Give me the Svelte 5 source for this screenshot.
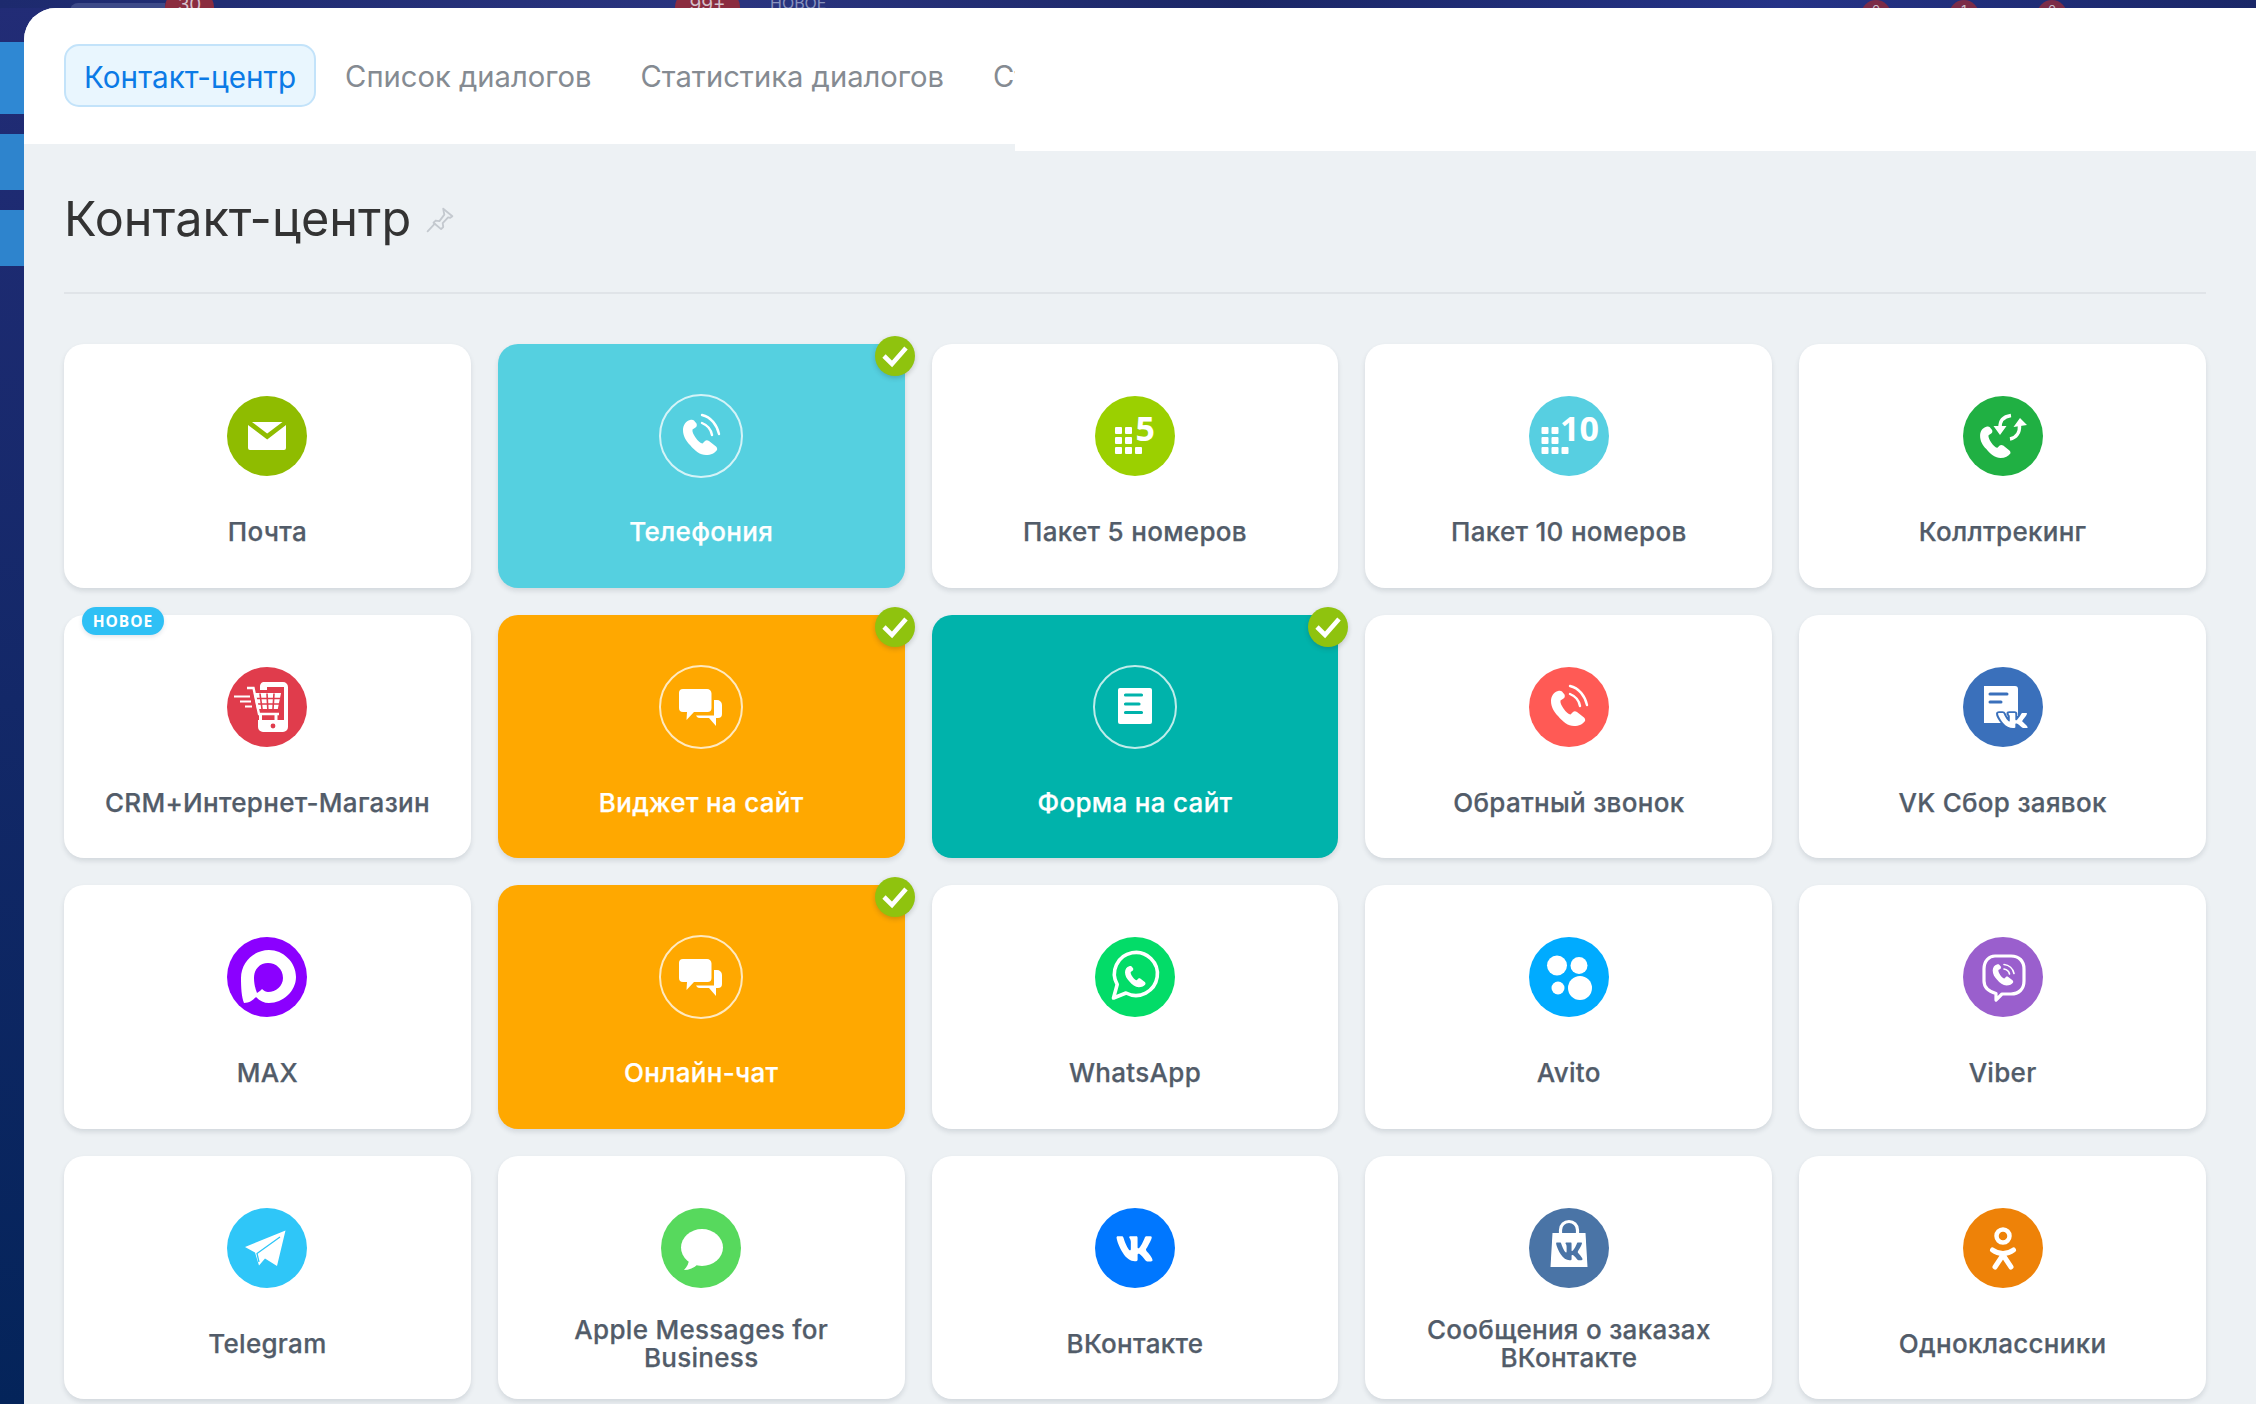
<script>
  const PHONE = "M29 24c-4 1-7 5-7 10c0 6 3 11 7 15c5 6 10 10 16 10c5 0 9-2 11-5c.5-1 0-2.5-1-3.5l-7-5.5c-1.5-1-3-1-4 0l-2.5 2.5c-2 0-4.500-2.500-7-6c-2-3-3.500-6-3-8l3-2c1.500-1 1.500-2.500 1-4l-2.500-3c-1-1-2.500-1-4-.5z";
  const VK = "M19.376 17.123h-1.744c-.66 0-.864-.525-2.05-1.727-1.033-1-1.49-1.135-1.744-1.135-.356 0-.458.102-.458.593v1.575c0 .424-.135.678-1.253.678-1.846 0-3.896-1.118-5.335-3.202C4.624 10.857 4.03 8.57 4.03 8.096c0-.254.102-.491.593-.491h1.744c.441 0 .61.203.78.677.863 2.49 2.303 4.675 2.896 4.675.22 0 .322-.102.322-.66V9.721c-.068-1.186-.695-1.287-.695-1.71 0-.204.17-.407.44-.407h2.744c.373 0 .508.203.508.643v3.473c0 .372.17.508.271.508.22 0 .407-.136.813-.542 1.254-1.406 2.151-3.574 2.151-3.574.119-.254.322-.491.763-.491h1.744c.525 0 .644.27.525.643-.22 1.017-2.354 4.031-2.354 4.031-.186.305-.254.44 0 .78.186.254.796.779 1.203 1.253.745.847 1.32 1.558 1.473 2.05.17.49-.085.744-.576.744z";

  const tabs = ["Контакт-центр", "Список диалогов", "Статистика диалогов", "Статистика"];

  const cards = [
    { label: "Почта", icon: "mail", tone: "t-mail" },
    { label: "Телефония", icon: "phone", tone: "t-cyan", on: true },
    { label: "Пакет 5 номеров", icon: "five", tone: "t-five" },
    { label: "Пакет 10 номеров", icon: "ten", tone: "t-ten" },
    { label: "Коллтрекинг", icon: "track", tone: "t-track" },
    { label: "CRM+Интернет-Магазин", icon: "shop", tone: "t-shop", fresh: true },
    { label: "Виджет на сайт", icon: "chat", tone: "t-orange", on: true },
    { label: "Форма на сайт", icon: "form", tone: "t-teal", on: true },
    { label: "Обратный звонок", icon: "phone", tone: "t-back" },
    { label: "VK Сбор заявок", icon: "vkform", tone: "t-vkform" },
    { label: "MAX", icon: "max", tone: "t-max" },
    { label: "Онлайн-чат", icon: "chat", tone: "t-orange", on: true },
    { label: "WhatsApp", icon: "wa", tone: "t-wa" },
    { label: "Avito", icon: "avito", tone: "t-avito" },
    { label: "Viber", icon: "viber", tone: "t-viber" },
    { label: "Telegram", icon: "tg", tone: "t-tg" },
    { label: "Apple Messages for Business", icon: "apple", tone: "t-apple" },
    { label: "ВКонтакте", icon: "vk", tone: "t-vk" },
    { label: "Сообщения о заказах ВКонтакте", icon: "vkshop", tone: "t-vkshop" },
    { label: "Одноклассники", icon: "ok", tone: "t-ok" }
  ];
</script>

<div class="app">
  <div class="topbar">
    <span class="pill"></span>
    <span class="red wide">30</span>
    <span class="red wider">99+</span>
    <span class="fresh-top">НОВОЕ</span>
    <span class="dot first">0</span>
    <span class="dot">1</span>
    <span class="dot">0</span>
  </div>
  <div class="body">
    <div class="rail">
      <span class="rail-tab big"></span>
      <span class="rail-tab"></span>
      <span class="rail-tab"></span>
    </div>
    <main class="panel">
      <header class="head">
        <nav class="tabs">
          {#each tabs as t, i}
            <span class="tab" class:active={i === 0}>{t}</span>
          {/each}
        </nav>
        <div class="filler"></div>
      </header>
      <section class="content">
        <div class="title-row">
          <h1>Контакт-центр</h1>
          <svg class="pin" viewBox="0 0 26 24" width="28" height="26" fill="none" stroke="#c4c9cf" stroke-width="1.7" stroke-linejoin="round" stroke-linecap="round">
            <path d="M16 1.500l8.500 7-2 1.500-2-.5-5 5.500.5 3.500-2 2-7-6 2-2 3.500.5 4.500-6-.5-2.500z" />
            <path d="M8 15.500L1.500 22.500" />
          </svg>
        </div>
        <div class="grid">
          {#each cards as c}
            <article class="card {c.tone}" class:on={c.on}>
              {#if c.fresh}<span class="fresh">НОВОЕ</span>{/if}
              {#if c.on}
                <span class="check">
                  <svg viewBox="0 0 40 40" width="40" height="40"><path d="M9 20l8 8 14-16" fill="none" stroke="#fff" stroke-width="4.600" /></svg>
                </span>
              {/if}
              <div class="ring">
                <svg class="icon" viewBox="0 0 80 80" width="80" height="80" fill="#fff">
                  {#if c.icon === "mail"}
                    <path d="M25 26H55.500L40.200 37.500Z" />
                    <path d="M21 29L40.200 43.500L59 29V52a2 2 0 0 1-2 2H23a2 2 0 0 1-2-2Z" />
                  {:else if c.icon === "phone"}
                    <path d={PHONE} />
                    <path d="M41 27c5 2 9 6 10 12M41 19c9 2 15 10 17 19" fill="none" stroke="#fff" stroke-width="2.400" stroke-linecap="round" />
                  {:else if c.icon === "five" || c.icon === "ten"}
                    <g transform={c.icon === "ten" ? "translate(-7.500 0)" : ""}>
                      <rect x="20" y="31" width="7" height="7" rx="1" />
                      <rect x="30" y="31" width="7" height="7" rx="1" />
                      <rect x="20" y="41" width="7" height="7" rx="1" />
                      <rect x="30" y="41" width="7" height="7" rx="1" />
                      <rect x="20" y="51" width="7" height="7" rx="1" />
                      <rect x="30" y="51" width="7" height="7" rx="1" />
                      <rect x="40" y="51" width="7" height="7" rx="1" />
                    </g>
                    {#if c.icon === "five"}
                      <text class="digits" x="40.500" y="45">5</text>
                    {:else}
                      <text class="digits" x="31" y="45">10</text>
                    {/if}
                  {:else if c.icon === "track"}
                    <path d={PHONE} transform="translate(-2.500 9.500) scale(.89)" />
                    <path d="M48 19.500C41 20.500 36.500 24 37 32M47 43C53 42 57 37 56.500 29" fill="none" stroke="#fff" stroke-width="3.400" />
                    <path d="M30.500 30L43.500 30L37 39ZM50.500 31L64 29L57 22Z" />
                  {:else if c.icon === "shop"}
                    <path d="M37 15H56a5 5 0 0 1 5 5V60a5 5 0 0 1-5 5H36a5 5 0 0 1-5-5V53H57V20H37Z" />
                    <path d="M36 15h4v8h-7v-3a5 5 0 0 1 3-5Z" />
                    <circle class="hole" cx="46" cy="59" r="2.400" />
                    <rect class="hole" x="25" y="24" width="32" height="27" />
                    <path d="M26.800 26H54L50.800 42H30Z" />
                    <path class="hs" d="M33 26.500L35 42M40 26.500L40.800 42M47 26.500L46 42M29 31.500H53M30 37H52" stroke-width="1.600" />
                    <path d="M20 21h6.500l5.500 26h20" fill="none" stroke="#fff" stroke-width="2.400" />
                    <path d="M33.500 48v5M49 48v5" fill="none" stroke="#fff" stroke-width="3" />
                    <path d="M7 29.500H23M13 34.500H24M18 39.500H25" fill="none" stroke="#fff" stroke-width="2.200" />
                  {:else if c.icon === "chat"}
                    <path d="M36 33H56a5 5 0 0 1 5 5V47a4 4 0 0 1-4 4H55L55 59L48 51H39a4 4 0 0 1-4-4Z" />
                    <path class="hole" d="M31 29H53V48.500H31Z" />
                    <path d="M22 22H46a4.500 4.500 0 0 1 4.500 4.500V41a4 4 0 0 1-4 4H33L25.500 53L26 45H22a4 4 0 0 1-4-4V26a4 4 0 0 1 4-4Z" />
                  {:else if c.icon === "form"}
                    <rect x="23" y="21" width="34" height="36" rx="2" />
                    <path class="hs" d="M30.500 28H46.500M30.500 37H44M30.500 45.500H46.500" stroke-width="3.200" stroke-linecap="round" />
                  {:else if c.icon === "vkform"}
                    <path d="M21 19H52a3 3 0 0 1 3 3V50H42V56H21Z" />
                    <path class="hs" d="M27 27H44M27 35H38" stroke-width="3" stroke-linecap="round" />
                    <path class="hs" d={VK} transform="translate(27.600 34) scale(1.850 1.580)" stroke-width="2.200" />
                    <path d={VK} transform="translate(27.600 34) scale(1.850 1.580)" />
                  {:else if c.icon === "max"}
                    <path d="M42 13C27 13 14 25 14 41C14 50 14.500 60 17 66C22 66 26 63 29 60C33 64 37 66 42 66C56 66 69 54 69 40C69 25 56 13 42 13Z" />
                    <path class="hole" d="M41 26C33 26 27 32 27 41C27 46 28 51 30 56C32 55 34 53 35 52C37 54 39 55 41 55C49 55 56 49 56 41C56 32 49 26 41 26Z" />
                  {:else if c.icon === "wa"}
                    <path d="M18.500 61l3.700-13.500A21.500 21.500 0 1 1 31 56Z" fill="none" stroke="#fff" stroke-width="3.600" stroke-linejoin="round" />
                    <path d={PHONE} transform="translate(16.800 14.800) scale(.6)" />
                  {:else if c.icon === "avito"}
                    <circle cx="28" cy="28.500" r="10" />
                    <circle cx="50" cy="28.500" r="8.500" />
                    <circle cx="29" cy="51" r="6.500" />
                    <circle cx="51" cy="51" r="12" />
                  {:else if c.icon === "viber"}
                    <path d="M32 19H48C56 19 61 24 61 32V44C61 52 56 57 48 57H39L33 63V56.500C26 54.500 21 50 21 44V32C21 24 26 19 32 19Z" fill="none" stroke="#fff" stroke-width="3.200" stroke-linejoin="round" />
                    <path d={PHONE} transform="translate(16.500 13) scale(.6)" />
                    <path d="M41 27.500c5 .5 9 4 10 9M41 32c2.500.5 5 2.500 5.500 5" fill="none" stroke="#fff" stroke-width="1.600" stroke-linecap="round" />
                  {:else if c.icon === "tg"}
                    <path d="M58.500 22.500L18 39L28 44.500L32 57.500L38 50.500L50 58Z" />
                    <path class="hs" d="M53 29L30 45.500L32 54" stroke-width="1.300" />
                  {:else if c.icon === "apple"}
                    <ellipse cx="41" cy="39.500" rx="21" ry="18.500" />
                    <path d="M28 51c0 4-2 8-5 11c5 0 10-2 14-6Z" />
                  {:else if c.icon === "vk"}
                    <path d={VK} transform="translate(12.500 8) scale(2.250 2.650)" />
                  {:else if c.icon === "vkshop"}
                    <path d="M21.500 59L23.500 25H56.500L58.500 59Z" />
                    <path d="M31.500 27V22a8.500 8.500 0 0 1 17 0V27" fill="none" stroke="#fff" stroke-width="3.200" />
                    <path class="hole" d={VK} transform="translate(20.500 20.500) scale(1.650 1.850)" />
                  {:else if c.icon === "ok"}
                    <circle cx="40" cy="28" r="6.500" fill="none" stroke="#fff" stroke-width="4.500" />
                    <path d="M29.500 42c6 4.500 15 4.500 21 0M40 47L32 59M40 47L48 59" fill="none" stroke="#fff" stroke-width="5" stroke-linecap="round" />
                  {/if}
                </svg>
              </div>
              <div class="label"><span>{c.label}</span></div>
            </article>
          {/each}
        </div>
      </section>
    </main>
  </div>
</div>

<style>
  :global(body) {
    margin: 0;
    background: #0d2565;
  }
  .app {
    width: 2256px;
    height: 1404px;
    overflow: hidden;
    display: flex;
    flex-direction: column;
    font-family: Inter, "Liberation Sans", sans-serif;
    background: linear-gradient(180deg, #222c76 0%, #04245a 100%);
  }
  .topbar {
    height: 8px;
    flex: none;
    display: flex;
    align-items: flex-start;
    overflow: hidden;
    background: linear-gradient(90deg, #1d2a6e 0%, #2a347f 33%, #1b2766 55%, #253387 79%, #1a2767 100%);
  }
  .pill {
    width: 95px;
    height: 30px;
    margin: 3px 0 0 70px;
    border-radius: 8px 0 0 8px;
    background: #3d4a88;
  }
  .red {
    margin-top: -8px;
    height: 30px;
    border-radius: 15px;
    background: #8b2c3f;
    color: #d4c2cc;
    font-size: 19px;
    line-height: 26px;
    text-align: center;
  }
  .wide { width: 49px; }
  .wider { width: 65px; margin-left: 461px; }
  .fresh-top {
    margin: -7px 0 0 30px;
    width: 60px;
    font-size: 16px;
    line-height: 20px;
    color: #8892bd;
  }
  .dot {
    width: 30px;
    height: 30px;
    margin: 0 58px 0 0;
    border-radius: 50%;
    background: #7b2c48;
    color: #c8bcc8;
    font-size: 13px;
    line-height: 20px;
    text-align: center;
  }
  .dot.first { margin-left: 1031px; }
  .body {
    flex: 1;
    display: flex;
    min-height: 0;
  }
  .rail {
    width: 24px;
    flex: none;
    padding-top: 34px;
    box-sizing: border-box;
    display: flex;
    flex-direction: column;
    gap: 20px;
  }
  .rail-tab {
    height: 56px;
    background: #2e84cd;
  }
  .rail-tab.big { height: 72px; background: #2f88d3; }
  .panel {
    flex: 1;
    min-width: 0;
    background: #edf1f4;
    border-top-left-radius: 32px;
    overflow: hidden;
  }
  .head {
    display: flex;
    align-items: flex-start;
  }
  .tabs {
    width: 991px;
    height: 136px;
    flex: none;
    box-sizing: border-box;
    padding: 36px 0 0 40px;
    display: flex;
    align-items: flex-start;
    gap: 9px;
    background: #fff;
    overflow: hidden;
  }
  .tab {
    flex: none;
    height: 63px;
    box-sizing: border-box;
    padding: 0 18px;
    border: 2px solid transparent;
    border-radius: 15px;
    font-size: 29.200px;
    line-height: 62px;
    color: #858b92;
    white-space: nowrap;
  }
  .tab.active {
    font-size: 29.700px;
    background: #e9f6fe;
    border-color: #c3e3fa;
    color: #0b7ae6;
  }
  .filler {
    flex: 1;
    height: 143px;
    background: #fff;
  }
  .content {
    padding: 0 50px 0 40px;
  }
  .title-row {
    display: flex;
    align-items: center;
    height: 143px;
    box-sizing: border-box;
    padding-bottom: 5px;
    border-bottom: 2px solid #e0e4e8;
    gap: 15px;
    margin-bottom: 50px;
  }
  h1 {
    margin: 0;
    font-size: 48.600px;
    font-weight: 400;
    color: #333;
    line-height: 56px;
  }
  .pin { margin-top: 2px; }
  .grid {
    display: grid;
    grid-template-columns: repeat(5, 1fr);
    grid-auto-rows: 243.6px;
    gap: 27px;
  }
  .card {
    position: relative;
    background: #fff;
    border-radius: 20px;
    box-shadow: 0 3px 5px rgba(60, 70, 85, 0.14);
    display: flex;
    flex-direction: column;
    align-items: center;
    padding-top: 50px;
    box-sizing: border-box;
  }
  .ring {
    width: 84px;
    height: 84px;
    flex: none;
    box-sizing: border-box;
    display: flex;
    align-items: center;
    justify-content: center;
    border-radius: 50%;
    border: 2px solid transparent;
  }
  .icon {
    flex: none;
    border-radius: 50%;
    background: var(--c);
    margin: -2px;
  }
  .card.on {
    background: var(--c);
  }
  .card.on .ring { border-color: rgba(255, 255, 255, 0.75); }
  .card.on .icon { background: transparent; }
  .label {
    height: 56px;
    margin-top: 26px;
    display: flex;
    align-items: center;
    justify-content: center;
    text-align: center;
    width: 100%;
    box-sizing: border-box;
    padding: 0 24px;
    font-size: 26px;
    font-weight: 500;
    line-height: 27.6px;
    letter-spacing: 0.3px;
    -webkit-text-stroke: 0.25px currentColor;
    color: #525c69;
  }
  .card.on .label {
    color: #fff;
  }
  .hole { fill: var(--c); }
  .hs { fill: none; stroke: var(--c); }
  .digits {
    font-family: "Open Sans", sans-serif;
    font-weight: 700;
    font-size: 34px;
    fill: #fff;
  }
  .check {
    position: absolute;
    top: -8px;
    right: -10px;
    width: 40px;
    height: 40px;
    border-radius: 50%;
    background: #8fc30e;
    box-shadow: 0 2px 5px rgba(40, 50, 40, 0.22);
    display: flex;
  }
  .fresh {
    position: absolute;
    top: -8px;
    left: 18px;
    width: 82px;
    height: 28px;
    border-radius: 14px;
    background: #2fc0f5;
    box-shadow: 0 2px 4px rgba(60, 90, 120, 0.15);
    color: #fff;
    font-family: "Open Sans", sans-serif;
    font-weight: 700;
    font-size: 15.500px;
    line-height: 28px;
    letter-spacing: 1px;
    text-align: center;
  }
  .t-mail { --c: #8fbc00; }
  .t-cyan { --c: #55d0e0; }
  .t-five { --c: #9bd000; }
  .t-ten { --c: #57cfe1; }
  .t-track { --c: #20b043; }
  .t-shop { --c: #e03c4c; }
  .t-orange { --c: #ffa800; }
  .t-teal { --c: #00b3ab; }
  .t-back { --c: #ff5a55; }
  .t-vkform { --c: #3a70bb; }
  .t-max { --c: #8b00ff; }
  .t-wa { --c: #03dc68; }
  .t-avito { --c: #00abff; }
  .t-viber { --c: #9a5fcd; }
  .t-tg { --c: #2fc6f8; }
  .t-apple { --c: #57d95d; }
  .t-vk { --c: #0077ff; }
  .t-vkshop { --c: #4a74a6; }
  .t-ok { --c: #ee8208; }
</style>
